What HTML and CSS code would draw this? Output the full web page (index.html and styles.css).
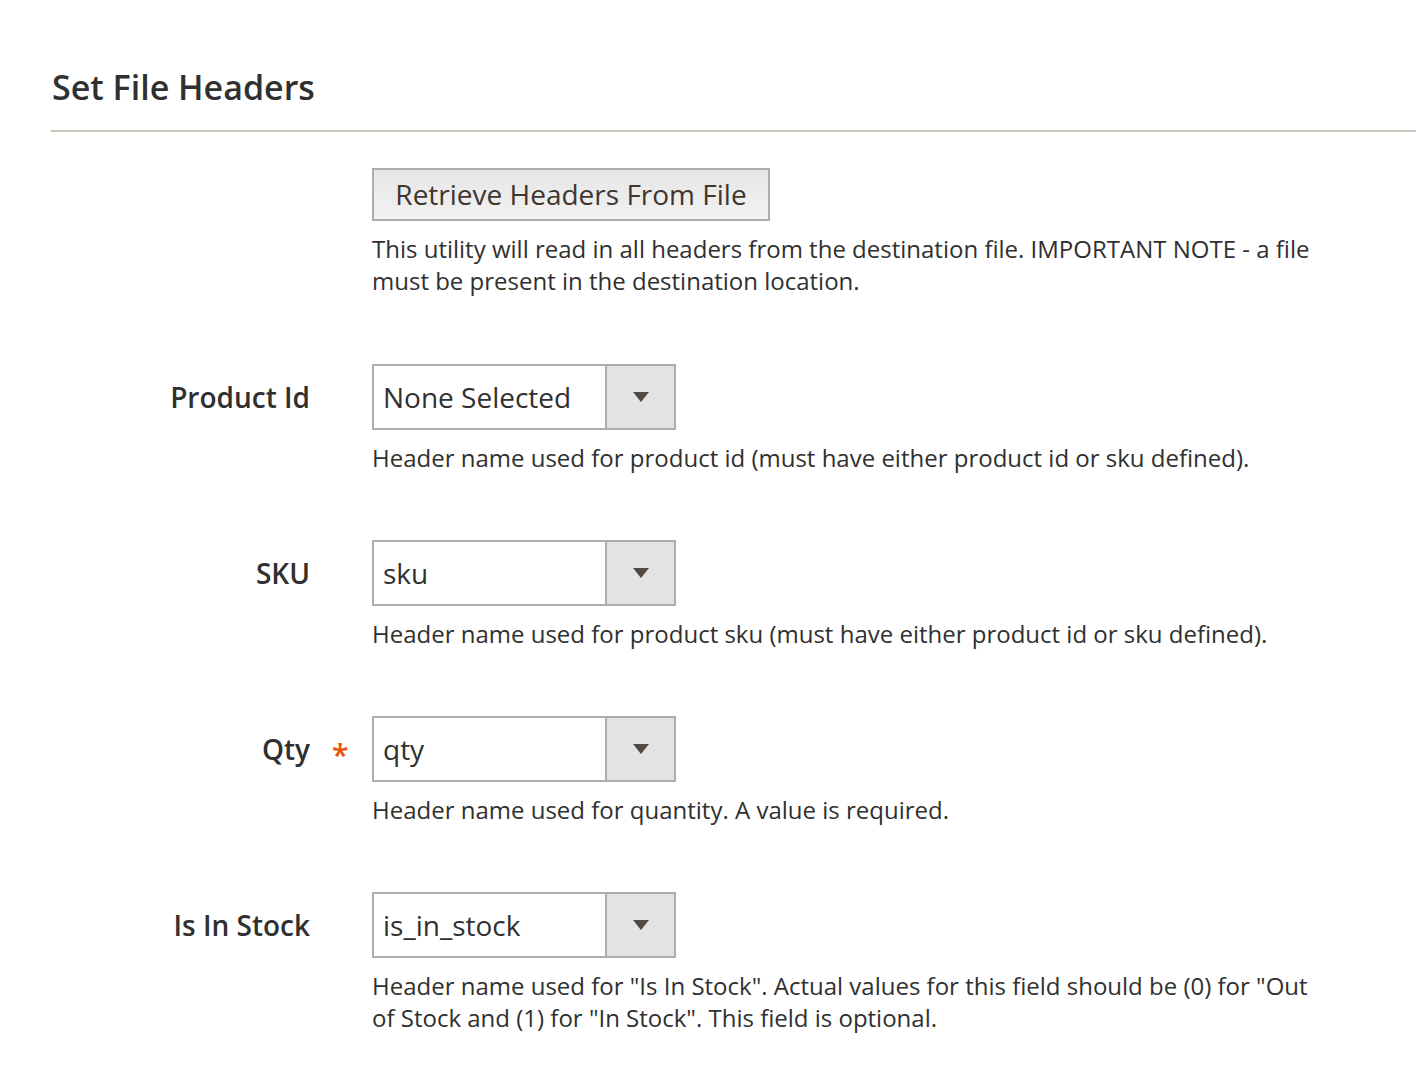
FILE: index.html
```html
<!DOCTYPE html>
<html>
<head>
<meta charset="utf-8">
<link rel="stylesheet" href="styles.css">
</head>
<body>
<div class="page">
  <h2 class="section-title">Set File Headers</h2>
  <div class="fields">
    <div class="row row-first">
      <div class="label"></div>
      <div class="mark"></div>
      <div class="control">
        <button class="btn">Retrieve Headers From File</button>
        <div class="note">This utility will read in all headers from the destination file. IMPORTANT NOTE - a file must be present in the destination location.</div>
      </div>
    </div>
    <div class="row">
      <div class="label">Product Id</div>
      <div class="mark"></div>
      <div class="control">
        <div class="select"><span class="value">None Selected</span><span class="arrow"><span class="tri"></span></span></div>
        <div class="note">Header name used for product id (must have either product id or sku defined).</div>
      </div>
    </div>
    <div class="row">
      <div class="label">SKU</div>
      <div class="mark"></div>
      <div class="control">
        <div class="select"><span class="value">sku</span><span class="arrow"><span class="tri"></span></span></div>
        <div class="note">Header name used for product sku (must have either product id or sku defined).</div>
      </div>
    </div>
    <div class="row">
      <div class="label">Qty</div>
      <div class="mark"><span class="req">*</span></div>
      <div class="control">
        <div class="select"><span class="value">qty</span><span class="arrow"><span class="tri"></span></span></div>
        <div class="note">Header name used for quantity. A value is required.</div>
      </div>
    </div>
    <div class="row">
      <div class="label">Is In Stock</div>
      <div class="mark"></div>
      <div class="control">
        <div class="select"><span class="value">is_in_stock</span><span class="arrow"><span class="tri"></span></span></div>
        <div class="note">Header name used for "Is In Stock". Actual values for this field should be (0) for "Out of Stock and (1) for "In Stock". This field is optional.</div>
      </div>
    </div>
  </div>
</div>
</body>
</html>
```
FILE: styles.css
```css
html, body {
  margin: 0;
  padding: 0;
  background: #ffffff;
}
body {
  font-family: "Open Sans", "Liberation Sans", sans-serif;
  color: #303030;
}
.page {
  padding: 64px 0 0 51px;
}
.section-title {
  margin: 0;
  padding: 0 0 20px 1px;
  font-size: 34px;
  line-height: 46px;
  font-weight: 600;
  color: #303030;
  border-bottom: 2px solid #ccc5b9;
}
.fields {
  padding-top: 36px;
}
.row {
  display: flex;
  align-items: flex-start;
  margin-bottom: 66px;
}
.row-first {
  margin-bottom: 67px;
}
.label {
  width: 259px;
  text-align: right;
  font-size: 28px;
  font-weight: 600;
  line-height: 66px;
  height: 66px;
  color: #303030;
}
.mark {
  width: 62px;
  height: 66px;
  position: relative;
}
.req {
  position: absolute;
  left: 22px;
  top: 24px;
  color: #eb5202;
  font-size: 30px;
  line-height: 30px;
  font-weight: 600;
}
.control {
  flex: 1;
  padding-right: 100px;
}
.btn {
  display: block;
  height: 53px;
  width: 398px;
  padding: 0;
  margin: 0;
  border: 2px solid #adadad;
  background: linear-gradient(#e6e6e6, #f2f2f2);
  font-family: "Open Sans", "Liberation Sans", sans-serif;
  font-size: 28px;
  line-height: 49px;
  white-space: nowrap;
  color: #41362f;
  text-align: center;
}
.note {
  margin-top: 12px;
  font-size: 24px;
  line-height: 32px;
  color: #303030;
  max-width: 950px;
}
.select {
  display: flex;
  width: 300px;
  height: 62px;
  border: 2px solid #adadad;
  background: #fff;
}
.value {
  flex: 1;
  padding-left: 9px;
  font-size: 28px;
  line-height: 62px;
  color: #303030;
}
.arrow {
  width: 67px;
  border-left: 2px solid #adadad;
  background: #e3e3e3;
  display: flex;
  align-items: center;
  justify-content: center;
}
.tri {
  width: 0;
  height: 0;
  border-left: 8px solid transparent;
  border-right: 8px solid transparent;
  border-top: 10px solid #514943;
}
```
